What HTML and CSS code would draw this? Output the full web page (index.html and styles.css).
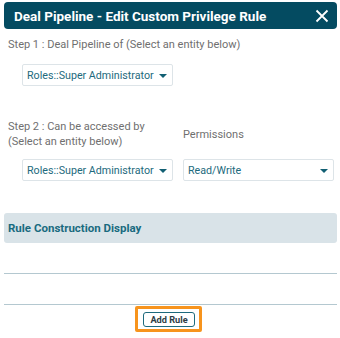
FILE: index.html
```html
<!DOCTYPE html>
<html lang="en">
<head>
    <meta charset="UTF-8">
    <title>Edit Custom Privilege Rule</title>
    <link rel="stylesheet" href="styles.css">
</head>
<body>
    <div class="dialog">
        <div class="dialog-header">
            <span class="dialog-title">Deal Pipeline - Edit Custom Privilege Rule</span>
            <svg class="close" width="14" height="14" viewBox="0 0 14 14">
                <path d="M1.5 1.5 L12.5 12.5 M12.5 1.5 L1.5 12.5" stroke="#fff" stroke-width="1.8" fill="none"/>
            </svg>
        </div>

        <div class="step step-one">
            <div class="label">Step 1 : Deal Pipeline of (Select an entity below)</div>
            <div class="field">
                <div class="select">
                    <span>Roles::Super Administrator</span>
                    <span class="caret"></span>
                </div>
            </div>
        </div>

        <div class="step step-two">
            <div class="cols">
                <div class="col">
                    <div class="label two-line">Step 2 : Can be accessed by<br>(Select an entity below)</div>
                    <div class="field">
                        <div class="select">
                            <span>Roles::Super Administrator</span>
                            <span class="caret"></span>
                        </div>
                    </div>
                </div>
                <div class="col">
                    <div class="label two-line perm">Permissions</div>
                    <div class="select">
                        <span>Read/Write</span>
                        <span class="caret"></span>
                    </div>
                </div>
            </div>
        </div>

        <div class="rule-panel">Rule Construction Display</div>
        <div class="rule-body"></div>

        <div class="footer">
            <span class="focus-ring">
                <button class="add-btn">Add Rule</button>
            </span>
        </div>
    </div>
</body>
</html>
```

FILE: styles.css
```css
html, body {
    margin: 0;
    padding: 0;
    background: #fff;
    font-family: Roboto, "Liberation Sans", sans-serif;
}

.dialog {
    width: 333px;
    margin-left: 4px;
    padding-top: 2px;
}

.dialog-header {
    height: 27px;
    background-color: #044b61;
    border-radius: 4px;
    display: flex;
    align-items: center;
    justify-content: space-between;
    padding: 0 8px 0 10px;
}

.dialog-title {
    color: #fff;
    font-weight: bold;
    font-size: 13.5px;
}

.close {
    display: block;
}

.label {
    color: #6f6f6f;
    font-size: 11px;
    padding-left: 4px;
}

.step-one {
    padding-top: 9px;
}

.field {
    padding-left: 18px;
}

.step-one .field {
    margin-top: 13px;
}

.select {
    box-sizing: border-box;
    width: 151px;
    height: 22px;
    border: 1px solid #dde4e8;
    border-radius: 2px;
    display: flex;
    align-items: center;
    justify-content: space-between;
    padding: 0 5px 0 4px;
    color: #1d6a7d;
    font-size: 10.7px;
    white-space: nowrap;
}

.caret {
    flex-shrink: 0;
    width: 0;
    height: 0;
    border-left: 4px solid transparent;
    border-right: 4px solid transparent;
    border-top: 4px solid #115f73;
    margin-top: 2px;
}

.step-two {
    padding-top: 33px;
}

.cols {
    display: flex;
    gap: 10px;
}

.two-line {
    height: 30px;
    line-height: 15px;
    margin-bottom: 10px;
}

.perm {
    padding-left: 0;
    padding-top: 8px;
    height: 22px;
}

.rule-panel {
    margin-top: 32px;
    height: 30px;
    background-color: #d9e3e8;
    border-radius: 3px;
    display: flex;
    align-items: center;
    padding-left: 4px;
    color: #196b80;
    font-weight: bold;
    font-size: 11.5px;
}

.rule-body {
    height: 30px;
    border-bottom: 1px solid #b4c8d0;
}

.footer {
    margin-top: 30px;
    border-top: 1px solid #b4c8d0;
    display: flex;
    justify-content: center;
    padding-top: 1px;
    padding-right: 4px;
}

.focus-ring {
    display: flex;
    border: 3px solid #f7941d;
    border-radius: 2px;
    padding: 3px 4px 2px 5px;
}

.add-btn {
    font-family: Roboto, "Liberation Sans", sans-serif;
    font-weight: bold;
    font-size: 9.2px;
    color: #2f3c44;
    background: #fff;
    border: 1px solid #1d6a7d;
    border-radius: 3px;
    height: 15px;
    padding: 0 6px;
}
```
